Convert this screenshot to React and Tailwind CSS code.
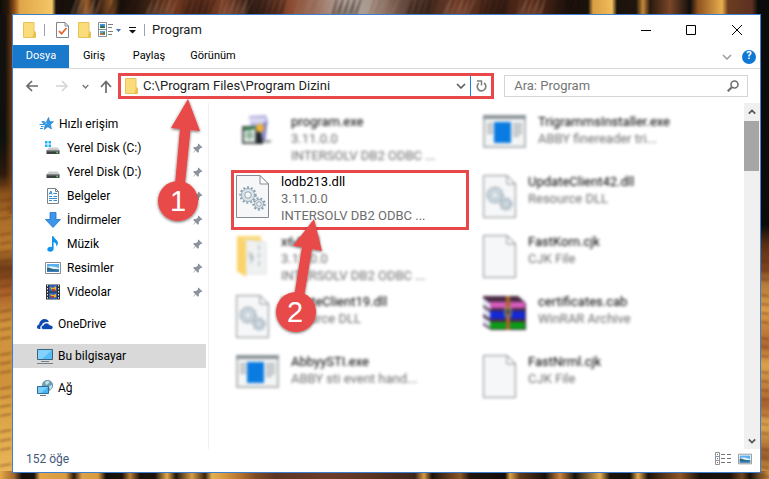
import React from 'react';

/* ---------- Desktop wallpaper ---------- */

const TOP_STOPS = [
  [0, '#0d0c08'], [8, '#2a1a0c'], [14, '#8a4a18'], [20, '#e0a548'], [52, '#f3c766'], [56, '#1a120c'],
  [75, '#15100c'], [86, '#9a5c24'], [96, '#1c130d'], [112, '#8d5526'], [120, '#17100b'], [150, '#3a2113'],
  [172, '#70391f'], [200, '#5a2d1c'], [225, '#7a3f26'], [250, '#2a1a14'], [290, '#8a4a30'], [315, '#9c7262'],
  [345, '#b3a49b'], [370, '#a8998f'], [400, '#6a5044'], [430, '#4a2e22'], [460, '#6b3925'], [500, '#3a1f15'],
  [530, '#5a2c1a'], [570, '#1a100c'], [588, '#1b120c'], [593, '#d99d42'], [612, '#f0bd5c'], [617, '#1a120c'],
  [636, '#20150d'], [643, '#c48838'], [650, '#2a190e'], [670, '#7a4628'], [690, '#120e0b'], [698, '#8f531f'],
  [722, '#e9ad4e'], [728, '#6b3c20'], [752, '#5c3121'], [758, '#0b0b0b'], [769, '#0b0b0b'],
];

const BOTTOM_STOPS = [
  [0, '#e6a94a'], [14, '#a0662c'], [22, '#120e0a'], [34, '#18110b'], [40, '#e2a548'], [66, '#d69a40'],
  [74, '#2a190d'], [82, '#dca24a'], [98, '#d89a3c'], [106, '#14100b'], [122, '#1a130c'], [130, '#b97c36'],
  [140, '#17110b'], [155, '#1a130c'], [167, '#e3a84c'], [176, '#20160d'], [192, '#d69c45'], [205, '#3a230f'],
  [212, '#e3b052'], [222, '#d99c42'], [240, '#b4732e'], [256, '#7d4a26'], [275, '#5d3524'], [330, '#6c3c2a'],
  [370, '#5a3424'], [415, '#3c261a'], [424, '#d79a42'], [432, '#1c130d'], [460, '#8d5626'], [470, '#1d140d'],
  [505, '#120e0b'], [510, '#dca046'], [520, '#5b381b'], [545, '#14100c'], [560, '#c9823c'], [575, '#14100c'],
  [600, '#e4ac50'], [610, '#1d140d'], [630, '#13100c'], [638, '#e4a94c'], [648, '#1b130c'], [680, '#8e5526'],
  [700, '#15100b'], [730, '#1c130c'], [742, '#6f4320'], [750, '#15100b'], [769, '#c98a3c'],
];

const LEFT_STOPS = [
  [0, '#14100d'], [130, '#0f110e'], [165, '#2d190c'], [185, '#8a531c'], [210, '#a96c28'], [240, '#b8782e'],
  [262, '#6f3c18'], [285, '#a85f28'], [320, '#d0933e'], [380, '#cf913c'], [400, '#d9a044'], [479, '#eab75a'],
];

const RIGHT_STOPS = [
  [0, '#0b0b0b'], [225, '#0d0b0a'], [245, '#5b3016'], [268, '#7b431e'], [285, '#b77d38'], [310, '#d99b44'],
  [345, '#b0682e'], [365, '#dca14a'], [405, '#a8622c'], [425, '#e0a84e'], [455, '#9c5f2a'], [479, '#dda247'],
];

function Stops({ list, total }) {
  return list.map(([at, color]) => <stop key={at} offset={at / total} stopColor={color} />);
}

function Wallpaper() {
  const hairs = Array.from({ length: 190 }, (_, i) => ({
    x: 60 + ((i * 37) % 520),
    dx: 3 + ((i * 7) % 6),
    color: ['#120c09', '#8c5133', '#2a1710', '#a58472'][i % 4],
  }));
  const knots = Array.from({ length: 26 }, (_, i) => 185 + i * 11 + ((i * 5) % 7));

  return (
    <svg className="absolute inset-0 h-full w-full" viewBox="0 0 769 479" preserveAspectRatio="none" aria-hidden="true">
      <defs>
        <linearGradient id="wall-top"><Stops list={TOP_STOPS} total={769} /></linearGradient>
        <linearGradient id="wall-bottom"><Stops list={BOTTOM_STOPS} total={769} /></linearGradient>
        <linearGradient id="wall-left" x2="0" y2="1"><Stops list={LEFT_STOPS} total={479} /></linearGradient>
        <linearGradient id="wall-right" x2="0" y2="1"><Stops list={RIGHT_STOPS} total={479} /></linearGradient>
        <linearGradient id="wall-edge">
          <stop offset="0.4" stopColor="#8a4a1c" stopOpacity="0" />
          <stop offset="1" stopColor="#8a4a1c" stopOpacity="0.8" />
        </linearGradient>
        <filter id="wall-soft"><feGaussianBlur stdDeviation="0.8" /></filter>
      </defs>
      <rect width="769" height="479" fill="#15100c" />
      <rect y="14" width="14" height="465" fill="url(#wall-left)" />
      <rect y="14" width="13" height="200" fill="url(#wall-edge)" />
      <rect x="758" y="0" width="11" height="479" fill="url(#wall-right)" />
      <rect width="769" height="15" fill="url(#wall-top)" />
      <rect y="471" width="769" height="8" fill="url(#wall-bottom)" />
      <g filter="url(#wall-soft)" opacity="0.5">
        {hairs.map((h, i) => (
          <path key={i} d={`M${h.x} 15 l${h.dx} -16`} stroke={h.color} strokeWidth="1.3" />
        ))}
        {knots.map((y) => (
          <path key={y} d={`M0 ${y} l11 -2 M761 ${y + 60} l8 1`} stroke="#5a2c10" strokeWidth="1.6" />
        ))}
      </g>
    </svg>
  );
}

/* ---------- Small icons ---------- */

function FolderIcon({ className = 'h-4 w-[13px]' }) {
  return (
    <svg className={className} viewBox="0 0 13 16" aria-hidden="true">
      <path d="M.5.5H11v9l1.500 1v5H.5z" fill="#fbdc7b" stroke="#e8c25a" />
      <path d="M11 9.500h1.500v6H9.500z" fill="#e9bf4e" />
    </svg>
  );
}

function CheckPageIcon() {
  return (
    <svg className="h-4 w-[13px]" viewBox="0 0 13 16" aria-hidden="true">
      <path d="M.5.5h8.500l3.500 3.500v11.500H.5z" fill="#fff" stroke="#7e868c" />
      <path d="M9 .5V4h3.500" fill="none" stroke="#7e868c" />
      <path d="M3 9l2.500 2.700L10.500 6" fill="none" stroke="#ea5b26" strokeWidth="1.700" />
    </svg>
  );
}

function ViewIcon() {
  return (
    <svg className="h-4 w-4" viewBox="0 0 16 16" aria-hidden="true">
      <path d="M.5.5h8v14h-8zM.5 7.500h8" fill="#fff" stroke="#888f94" />
      <path d="M2 2h5v4H2z" fill="#3f94dd" />
      <path d="M2 5l2.500-1.500L7 5v1H2z" fill="#2a6d45" />
      <path d="M2 9h5v4H2z" fill="#57a8d9" />
      <path d="M2 11h3v2H2z" fill="#d86538" />
      <path d="M5 10h2v3H5z" fill="#31935a" />
      <path d="M10 2.500h5M10 5.500h4M10 9.500h5M10 12.500h4" stroke="#7a8085" />
    </svg>
  );
}

function PinIcon() {
  return (
    <svg className="h-[11px] w-[11px]" viewBox="0 0 11 11" aria-hidden="true">
      <path d="M6.500.5l4 4-1 .6-.8-.2-1.900 2 .1 2.100-1 .8-2.200-2.200L.5 10.500l2.700-3.600L1.200 4.900l.8-.9 2.200.1 2-1.900-.3-.9z" fill="#8b949c" />
    </svg>
  );
}

function Chevron({ className, color = '#555', d = 'M1 1l4 4 4-4', w = 1.5 }) {
  return (
    <svg className={className} viewBox="0 0 10 6" aria-hidden="true">
      <path d={d} fill="none" stroke={color} strokeWidth={w} />
    </svg>
  );
}

function StarIcon() {
  return (
    <svg className="h-4 w-4" viewBox="0 0 16 16" aria-hidden="true">
      <path d="M9.500 1.500l1.200 4 3.800.2-3 2.700.9 4.600-3.500-2.300L5.200 13.500l1-4.300L3.500 6.500l3.800-.3z" fill="#2f9ae8" stroke="#1c6fbd" strokeWidth=".6" />
      <path d="M9.300 3.700L8.200 6.600l-2.700.2 2 1.700z" fill="#7cc6f7" />
      <path d="M2.500 5.500h3M.5 8.500h4.500M2 10.500h2.500M1 12.500h3" stroke="#2f9ae8" />
    </svg>
  );
}

function DiskIcon({ system }) {
  return (
    <svg className="h-4 w-4" viewBox="0 0 16 16" aria-hidden="true">
      {system && <path d="M0 1h2.500v2.500H0zM3.500 1H6v2.500H3.500zM0 4.500h2.500V7H0zM3.500 4.500H6V7H3.500z" fill="#1fb1ee" />}
      <path d="M4 7.500h8.500l2.500 3H1.500z" fill="#c9cbcc" />
      <path d="M1.500 10.500h13v3.500h-13z" fill="#3d4143" />
      <path d="M1.500 10.500h13v1h-13z" fill="#777c7e" />
      <circle cx="12.200" cy="12.500" r=".9" fill="#55e35b" />
    </svg>
  );
}

function DocumentsIcon() {
  return (
    <svg className="h-4 w-4" viewBox="0 0 16 16" aria-hidden="true">
      <path d="M2.500.5h8l3 3v12h-11z" fill="#fff" stroke="#7c8286" />
      <path d="M10.500.5v3h3" fill="none" stroke="#7c8286" />
      <path d="M4 6.500l2-3.500 1 3.500M4.500 5.300h2M8.500 5.500H12M4 8.500h3M8.500 8.500H12M4 10.500h8M4 12.500h3M8.500 12.500H12" fill="none" stroke="#2f8ad0" />
    </svg>
  );
}

function DownloadsIcon() {
  return (
    <svg className="h-4 w-4" viewBox="0 0 16 16" aria-hidden="true">
      <path d="M5 .5h6v7h4.500L8 15.500.5 7.500H5z" fill="#3c96ea" stroke="#2372c4" strokeWidth=".8" />
    </svg>
  );
}

function MusicIcon() {
  return (
    <svg className="h-4 w-4" viewBox="0 0 16 16" aria-hidden="true">
      <path d="M7 .3h1.600c.3 2.800 4.600 3.500 4.300 7-.1 1.600-.9 2.700-1.600 3.500.5-2.500-.4-4.300-2.700-4.900v6.800c0 2-1.600 3-3.400 3s-2.900-.9-2.900-2.200c0-1.700 1.800-3 4.700-2.600z" fill="#0e94ee" />
    </svg>
  );
}

function PictureIcon({ className = 'h-4 w-4' }) {
  return (
    <svg className={className} viewBox="0 0 16 16" aria-hidden="true">
      <path d="M.5 2.500h15v11H.5z" fill="#fff" stroke="#868c90" />
      <path d="M2 4h12v8H2z" fill="#5ab0ee" />
      <path d="M2 7c4-1.500 7-.5 12 1v1H2z" fill="#dff0fa" />
      <path d="M2 7.500c3 0 5 2 12 2.300V12H2z" fill="#2d6678" />
      <path d="M2 10.500h12V12H2z" fill="#3b7fc0" />
    </svg>
  );
}

function VideosIcon() {
  return (
    <svg className="h-4 w-4" viewBox="0 0 16 16" aria-hidden="true">
      <path d="M1 .5h14v15H1z" fill="#2d3032" />
      <path d="M2.500 1v15M13.500 1v15" stroke="#e8e8e8" strokeDasharray="1.500 1.500" />
      <path d="M4 1h8v6.500H4zM4 8.500h8V15H4z" fill="#2d63bf" />
      <path d="M5 3l3 1 3-2v4l-3 1-2-2zM5 10l3 1 3-1v3l-4 1z" fill="#eeb42e" />
      <path d="M7 5h3v2H7zM6 12h3v2H6z" fill="#bd3f27" />
    </svg>
  );
}

function OneDriveIcon() {
  return (
    <svg className="h-4 w-4" viewBox="0 0 16 16" aria-hidden="true">
      <path d="M0 11c0-1.600 1-2.400 2.200-2.500C2 5 6.500 1.500 9.800 3.600c1.200.7 1.700 1.400 2 2.300L8 6.300c-2 .3-2.700 1.700-2.800 2.600C3.700 9.300 3 10.500 3.500 13H2c-1.300 0-2-1-2-2z" fill="#0c49b0" />
      <path d="M4.300 11.300c0-1.300.9-1.900 2-2C6.500 7.300 10.700 5.500 12.700 9c2 .1 3.300 1 3.300 2.300S15 13.500 14 13.500H6.500c-1.300 0-2.200-1-2.200-2.200z" fill="#0c49b0" stroke="#fff" strokeWidth=".7" />
    </svg>
  );
}

function ComputerIcon() {
  return (
    <svg className="h-4 w-4" viewBox="0 0 16 16" aria-hidden="true">
      <path d="M.5 1.500h15v10H.5z" fill="#58bcf6" stroke="#38627e" />
      <path d="M1 2h14L5 11H1z" fill="#83d2fb" />
      <path d="M4 13.500h8M0 15.500h16" stroke="#74828c" />
    </svg>
  );
}

function NetworkIcon() {
  return (
    <svg className="h-4 w-4" viewBox="0 0 16 16" aria-hidden="true">
      <circle cx="10.500" cy="5.500" r="5.200" fill="#6f9fb4" stroke="#44748e" strokeWidth=".6" />
      <path d="M8 2c2-1.500 4-1 4.500 0L11 4l-2 1zM12 6l3-1c.4 2-.5 4-2 5z" fill="#c6e2e2" />
      <path d="M.5 6.500h11v7H.5z" fill="#49b4f5" stroke="#2c6c97" />
      <path d="M1 7h10l-7 6H1z" fill="#7bcefa" />
      <path d="M3 15.500h6" stroke="#627885" />
    </svg>
  );
}

/* ---------- File icons ---------- */

function Gear({ cx, cy, r }) {
  return (
    <g>
      <circle cx={cx} cy={cy} r={r} fill="none" stroke="#8fa2b0" strokeWidth="2.400" strokeDasharray="1.900 1.900" />
      <circle cx={cx} cy={cy} r={r - 1} fill="#dbe4ea" stroke="#9cadb9" strokeWidth="1" />
      <circle cx={cx} cy={cy} r={r / 2 - 0.5} fill="#f5f7f8" stroke="#93a5b2" />
    </g>
  );
}

function PageIcon({ gears }) {
  return (
    <svg className="h-[43px] w-[33px]" viewBox="0 0 33 43" aria-hidden="true">
      <path d="M.5.500h23.500l8.500 8.500v33.500H.5z" fill="#f6f7f8" stroke="#858b90" />
      <path d="M24 .5V9h8.500z" fill="#fff" stroke="#858b90" />
      {gears && <Gear cx={12} cy={20} r={7.500} />}
      {gears && <Gear cx={23} cy={29} r={5.500} />}
    </svg>
  );
}

function AppIcon() {
  return (
    <svg className="h-[33px] w-[43px]" viewBox="0 0 43 33" aria-hidden="true">
      <path d="M1 1h41v31H1z" fill="#f4f5f5" stroke="#b3b8bb" strokeWidth="2" />
      <path d="M0 0h43v4H0z" fill="#8b9398" />
      <path d="M4 9h6M4 12h6M4 15h6M4 18h6M30 9h9M30 12h9M30 15h9M30 18h9M30 21h6" stroke="#b4b8bb" strokeWidth="2" />
      <path d="M11 7h17v21H11z" fill="#0a7be0" />
    </svg>
  );
}

function SetupIcon() {
  return (
    <svg className="ml-[5px] h-8 w-8" viewBox="0 0 32 32" aria-hidden="true">
      <path d="M8 1l17-1 2 6-3 22H12z" fill="#b5b4e0" />
      <path d="M9 3h15l1 5H9z" fill="#dcdaf4" />
      <path d="M22 8l4-2-2 22h-3z" fill="#8482c4" />
      <path d="M2 12h13v16H2z" fill="#e6ece8" stroke="#4c5852" strokeWidth="2" />
      <path d="M4 20l5-5 4 6-5 4z" fill="#8fb79c" />
      <path d="M3 12l12-1v3L3 16z" fill="#38784e" />
      <circle cx="19" cy="13" r="4" fill="#efb138" />
      <path d="M16 17h4l2 12h-7z" fill="#25282b" />
      <path d="M23 25h8l-2 3h-7z" fill="#a2a6a8" />
    </svg>
  );
}

function OpenFolderIcon() {
  return (
    <svg className="h-[42px] w-[33px]" viewBox="0 0 33 42" aria-hidden="true">
      <path d="M1 1h24v36H1z" fill="#fcd978" />
      <path d="M10 5l20 2v32H10z" fill="#f0f2f2" stroke="#dcdfe0" />
      <path d="M1 1l9 8v33l-9-6z" fill="#fbd36a" />
      <path d="M13 17l5 5-3 5zM23 10v24" fill="#a9b8c2" stroke="#c3cacf" strokeWidth="2" strokeDasharray="5 3" />
    </svg>
  );
}

function RarIcon() {
  return (
    <svg className="h-[36px] w-[43px]" viewBox="0 0 43 36" aria-hidden="true">
      <path d="M0 1h35l8 7v27H8L0 30z" fill="#4b2a45" />
      <path d="M0 3l8 6v6l-8-5zM0 12l8 6v6l-8-5zM0 22l8 5v6l-8-5z" fill="#e2e6f4" />
      <path d="M7 7h35v6H7z" fill="#d75cbc" />
      <path d="M7 16h35v8H7z" fill="#1428d4" />
      <path d="M7 27h35v7H7z" fill="#0b9c16" />
      <path d="M23 1h4v34h-4z" fill="#a8672a" />
      <path d="M22 13h6v8h-6z" fill="#5a5248" stroke="#b0a27c" />
    </svg>
  );
}

/* ---------- Data ---------- */

const QUICK_ACCESS = [
  { label: 'Yerel Disk (C:)', icon: <DiskIcon system /> },
  { label: 'Yerel Disk (D:)', icon: <DiskIcon /> },
  { label: 'Belgeler', icon: <DocumentsIcon /> },
  { label: 'İndirmeler', icon: <DownloadsIcon /> },
  { label: 'Müzik', icon: <MusicIcon /> },
  { label: 'Resimler', icon: <PictureIcon /> },
  { label: 'Videolar', icon: <VideosIcon /> },
];

const FILES = [
  { name: 'program.exe', lines: ['3.11.0.0', 'INTERSOLV DB2 ODBC ...'], icon: <SetupIcon />, wide: true },
  { name: 'TrigrammsInstaller.exe', lines: ['ABBY finereader tri...'], icon: <AppIcon />, wide: true },
  { name: 'lodb213.dll', lines: ['3.11.0.0', 'INTERSOLV DB2 ODBC ...'], icon: <PageIcon gears />, active: true },
  { name: 'UpdateClient42.dll', lines: ['Resource DLL'], icon: <PageIcon gears /> },
  { name: 'x64.dll', lines: ['3.11.0.0', 'INTERSOLV DB2 ODBC ...'], icon: <OpenFolderIcon /> },
  { name: 'FastKorn.cjk', lines: ['CJK File'], icon: <PageIcon /> },
  { name: 'UpdateClient19.dll', lines: ['Resource DLL'], icon: <PageIcon gears /> },
  { name: 'certificates.cab', lines: ['WinRAR Archive'], icon: <RarIcon />, wide: true },
  { name: 'AbbyySTI.exe', lines: ['ABBY sti event hand...'], icon: <AppIcon />, wide: true },
  { name: 'FastNrml.cjk', lines: ['CJK File'], icon: <PageIcon /> },
];

/* ---------- Window parts ---------- */

function TitleBar() {
  return (
    <header className="flex h-[30px] items-center pl-[10px] text-black">
      <FolderIcon />
      <span className="ml-2 h-3 w-px bg-gray-400" />
      <button type="button" aria-label="Özellikler" className="ml-[11px]"><CheckPageIcon /></button>
      <button type="button" aria-label="Yeni klasör" className="ml-[9px]"><FolderIcon /></button>
      <button type="button" aria-label="Görünüm seçenekleri" className="ml-[7px] flex items-center gap-[2px]">
        <ViewIcon />
        <svg className="h-[3px] w-[5px]" viewBox="0 0 5 3" aria-hidden="true"><path d="M0 0h5L2.500 3z" fill="#3d6fb4" /></svg>
      </button>
      <button type="button" aria-label="Araç çubuğunu özelleştir" className="ml-2">
        <svg className="h-[7px] w-[7px]" viewBox="0 0 7 7" aria-hidden="true"><path d="M0 0h7v1H0zM0 3h7L3.500 6.500z" fill="#111" /></svg>
      </button>
      <span className="ml-2 h-3 w-px bg-gray-400" />
      <h1 className="ml-[7px] text-[13px] text-[#222]">Program</h1>
      <div className="ml-auto flex h-full items-center">
        <button type="button" aria-label="Simge durumuna küçült" className="flex h-full w-[45px] items-center justify-center">
          <svg className="h-[10px] w-[10px]" viewBox="0 0 10 10" aria-hidden="true"><path d="M0 5.500h10" stroke="#000" /></svg>
        </button>
        <button type="button" aria-label="Ekranı kapla" className="flex h-full w-[45px] items-center justify-center">
          <svg className="h-[10px] w-[10px]" viewBox="0 0 10 10" aria-hidden="true"><path d="M.5.5h9v9h-9z" fill="none" stroke="#000" /></svg>
        </button>
        <button type="button" aria-label="Kapat" className="flex h-full w-[47px] items-center justify-center">
          <svg className="h-[10px] w-[10px]" viewBox="0 0 10 10" aria-hidden="true"><path d="M0 0l10 10M10 0L0 10" stroke="#000" /></svg>
        </button>
      </div>
    </header>
  );
}

function RibbonTabs() {
  return (
    <nav className="flex h-6 border-b border-[#dadbdc] text-[11px] text-black">
      <button type="button" className="w-14 bg-[#1979ca] text-white">Dosya</button>
      <button type="button" className="w-[50px]">Giriş</button>
      <button type="button" className="w-[60px]">Paylaş</button>
      <button type="button" className="w-[68px]">Görünüm</button>
      <div className="ml-auto flex items-center gap-[10px] pr-1">
        <button type="button" aria-label="Şeridi genişlet"><Chevron className="h-[6px] w-[10px]" color="#9a9a9a" /></button>
        <button type="button" aria-label="Yardım" className="flex h-[14px] w-[14px] items-center justify-center rounded-full bg-[#0f78d4] text-[11px] font-bold text-white">?</button>
      </div>
    </nav>
  );
}

function NavBar() {
  return (
    <div className="flex h-[34px] items-center">
      <div className="flex items-center pl-[13px]">
        <button type="button" aria-label="Geri">
          <svg className="h-3 w-3" viewBox="0 0 12 12" aria-hidden="true"><path d="M12 6H1.500M6 1L1 6l5 5" fill="none" stroke="#6b6b6b" strokeWidth="1.700" /></svg>
        </button>
        <button type="button" aria-label="İleri" className="ml-[18px]">
          <svg className="h-3 w-3" viewBox="0 0 12 12" aria-hidden="true"><path d="M0 6h10.500M6 1l5 5-5 5" fill="none" stroke="#d4d4d4" strokeWidth="1.500" /></svg>
        </button>
        <button type="button" aria-label="Son konumlar" className="ml-[14px]"><Chevron className="h-[5px] w-[7px]" color="#777" w={2} /></button>
        <button type="button" aria-label="Yukarı" className="ml-[11px]">
          <svg className="h-[13px] w-3" viewBox="0 0 12 13" aria-hidden="true"><path d="M6 13V2M1 7l5-5.500L11 7" fill="none" stroke="#6b6b6b" strokeWidth="1.700" /></svg>
        </button>
      </div>
      <div className="ml-[6px] flex h-[26px] flex-[375] items-center border-[3px] border-[#e9484a] bg-white">
        <span className="ml-1"><FolderIcon /></span>
        <input
          aria-label="Adres"
          defaultValue="C:\Program Files\Program Dizini"
          className="ml-[5px] min-w-0 flex-1 bg-transparent text-[13px] text-[#222] outline-none"
        />
        <button type="button" aria-label="Önceki konumlar" className="mr-1"><Chevron className="h-[6px] w-[10px]" color="#555" /></button>
        <button type="button" aria-label="Yenile" className="flex h-full w-[21px] items-center justify-center border-l border-[#1a7fd6]">
          <svg className="h-3 w-[11px]" viewBox="0 0 11 12" aria-hidden="true">
            <path d="M2.800 3.200A4.300 4.300 0 1 0 8 3" fill="none" stroke="#808080" strokeWidth="1.700" />
            <path d="M1 1h4.500v4.500" fill="none" stroke="#808080" strokeWidth="1.500" />
          </svg>
        </button>
      </div>
      <div className="mr-3 ml-[10px] flex h-[22px] flex-[245] items-center border border-[#d5d5d5]">
        <input
          aria-label="Ara"
          placeholder="Ara: Program"
          className="ml-[9px] min-w-0 flex-1 bg-transparent text-[13px] outline-none placeholder:text-[#767676]"
        />
        <svg className="mr-2 h-3 w-3" viewBox="0 0 12 12" aria-hidden="true">
          <circle cx="7.500" cy="4.500" r="3.500" fill="none" stroke="#707070" strokeWidth="1.600" />
          <path d="M5 7L.7 11.300" stroke="#707070" strokeWidth="2.200" />
        </svg>
      </div>
    </div>
  );
}

function Sidebar() {
  return (
    <aside className="flex w-[196px] shrink-0 flex-col gap-2 border-r border-[#efefef] pt-[9px] pr-[2px] text-[12px] text-black">
      <div>
        <a href="#quick" className="flex h-6 items-center gap-1 pl-[26px]">
          <StarIcon />
          Hızlı erişim
        </a>
        <ul>
          {QUICK_ACCESS.map((item) => (
            <li key={item.label}>
              <a href="#folder" className="flex h-6 items-center gap-[6px] pr-[3px] pl-8">
                {item.icon}
                {item.label}
                <span className="ml-auto"><PinIcon /></span>
              </a>
            </li>
          ))}
        </ul>
      </div>
      <a href="#onedrive" className="flex h-6 items-center gap-[5px] pl-6"><OneDriveIcon />OneDrive</a>
      <a href="#computer" className="flex h-6 items-center gap-[5px] bg-[#d9d9d9] pl-6"><ComputerIcon />Bu bilgisayar</a>
      <a href="#network" className="flex h-6 items-center gap-[5px] pl-6"><NetworkIcon />Ağ</a>
    </aside>
  );
}

function FileItem({ file }) {
  const frame = file.active
    ? 'mr-[13px] -ml-1 border-[3px] border-[#e9484a] pl-[2px]'
    : 'pt-[3px] pl-px blur-[1.500px]';

  return (
    <li className={`flex h-[60px] items-start ${frame}`}>
      <div className={`shrink-0 pt-[2px] ${file.wide ? 'w-[55px]' : 'w-[45px]'}`}>{file.icon}</div>
      <div className="min-w-0 text-[13px] leading-[17px] whitespace-nowrap text-[#6d6d6d]">
        <p className="text-black">{file.name}</p>
        {file.lines.map((line) => <p key={line}>{line}</p>)}
      </div>
    </li>
  );
}

function ScrollBar() {
  return (
    <div className="flex w-4 shrink-0 flex-col bg-[#f0f0f0]">
      <button type="button" aria-label="Yukarı kaydır" className="flex h-[18px] items-center justify-center">
        <Chevron className="h-[6px] w-2" d="M1 5l4-4 4 4" w={2.2} />
      </button>
      <div className="mr-px h-[50px] bg-[#a6a6a6]" />
      <button type="button" aria-label="Aşağı kaydır" className="mt-auto flex h-[17px] items-center justify-center">
        <Chevron className="h-[6px] w-2" w={2.2} />
      </button>
    </div>
  );
}

function StatusBar() {
  return (
    <footer className="flex h-[23px] items-center justify-between pr-2 pb-1 pl-[13px] text-[12px] text-[#44587c]">
      <span>152 öğe</span>
      <div className="flex items-center gap-[7px]">
        <button type="button" aria-label="Ayrıntılar">
          <svg className="h-[13px] w-4" viewBox="0 0 16 13" aria-hidden="true">
            <path d="M.5.5h4v12h-4zM.5 4.500h4M.5 8.500h4" fill="#fff" stroke="#8d9398" />
            <path d="M6 2.500h4M12 2.500h4M6 6.500h4M12 6.500h4M6 10.500h4M12 10.500h4" stroke="#6e7478" />
            <path d="M2 2h1v1H2z" fill="#3c8a5a" /><path d="M2 6h1v1H2z" fill="#3475c0" /><path d="M2 10h1v1H2z" fill="#c0392b" />
          </svg>
        </button>
        <button type="button" aria-label="Büyük simgeler"><PictureIcon className="h-[14px] w-[14px]" /></button>
      </div>
    </footer>
  );
}

/* Numbered arrows lie over the window */
function Callouts() {
  return (
    <svg className="pointer-events-none absolute top-0 left-0 h-[360px] w-[360px]" viewBox="0 0 360 360" aria-hidden="true">
      <defs>
        <filter id="callout-shadow" x="-30%" y="-30%" width="160%" height="160%">
          <feDropShadow dx="0" dy="1" stdDeviation="1.500" floodColor="#000" floodOpacity="0.6" />
        </filter>
      </defs>
      <g fill="#e84a48" filter="url(#callout-shadow)">
        <path d="M188 99l12 32-9.500-1L185 184H175l5-55-9-1z" />
        <circle cx="178" cy="201" r="20" />
      </g>
      <g fill="#e84a48" filter="url(#callout-shadow)">
        <path d="M314 219l8 32-10-2-8 48h-10l8-50-9-1z" />
        <circle cx="296" cy="312" r="20" />
      </g>
      <g fill="#fff" fontSize="29" textAnchor="middle" className="font-['Liberation_Sans',sans-serif]">
        <text x="178" y="211">1</text>
        <text x="295" y="322">2</text>
      </g>
    </svg>
  );
}

export default function App() {
  return (
    <div className="relative flex min-h-screen flex-col overflow-hidden pt-[14px] pr-2 pb-[6px] pl-3 font-['Roboto','Open_Sans',sans-serif]">
      <Wallpaper />
      <main className="relative flex flex-1 flex-col border border-[#3f7fd0] bg-white">
        <TitleBar />
        <RibbonTabs />
        <NavBar />
        <div className="flex flex-1">
          <Sidebar />
          <ul className="grid flex-1 grid-cols-2 content-start pt-[7px] pr-[15px] pl-[26px]">
            {FILES.map((file) => <FileItem key={file.name} file={file} />)}
          </ul>
          <ScrollBar />
        </div>
        <StatusBar />
      </main>
      <Callouts />
    </div>
  );
}
